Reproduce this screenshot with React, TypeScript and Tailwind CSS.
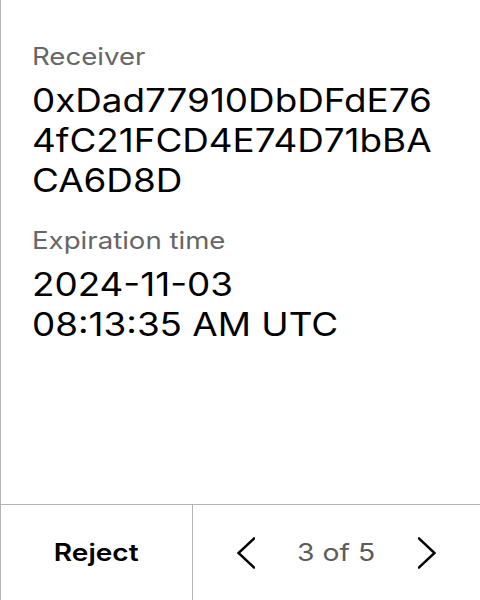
import { FC } from 'react';

// the reference type is set wide; a small horizontal stretch matches it better than tracking
const Field: FC<{ label: string; lines: string[] }> = ({ label, lines }) => (
	<div className="flex origin-left scale-x-[1.15] flex-col gap-2 self-start">
		<div className="text-[24px] leading-[32px] text-[#666666]">{label}</div>
		<div className="text-[32px] leading-[40px] text-black">
			{lines.map((line) => (
				<div key={line}>{line}</div>
			))}
		</div>
	</div>
);

const Chevron: FC<{ dir: 'left' | 'right' }> = ({ dir }) => (
	<svg width="18" height="32" viewBox="0 0 18 32" fill="none" className="shrink-0">
		<polyline
			points={dir === 'left' ? '17,1.5 1.5,16 17,30.5' : '1,1.5 16.5,16 1,30.5'}
			stroke="#000"
			strokeWidth="2.4"
			strokeLinecap="square"
			strokeLinejoin="miter"
		/>
	</svg>
);

export default function App() {
	return (
		<div
			className="flex h-[600px] w-[480px] flex-col border-l border-[#b3b3b3] bg-white"
			style={{ fontFamily: 'Inter, "Liberation Sans", sans-serif' }}>
			<div className="flex flex-1 flex-col gap-6 pl-[31px] pt-[41px]">
				<Field
					label="Receiver"
					lines={['0xDad77910DbDFdE76', '4fC21FCD4E74D71bBA', 'CA6D8D']}
				/>
				<Field label="Expiration time" lines={['2024-11-03', '08:13:35 AM UTC']} />
			</div>
			<div className="flex h-[96px] border-t border-[#b3b3b3]">
				<button
					type="button"
					className="flex w-[192px] items-center justify-center border-r border-[#b3b3b3] text-[24px] font-semibold text-black">
					<span className="scale-x-[1.17]">Reject</span>
				</button>
				<div className="flex flex-1 items-center justify-center gap-[48px]">
					<Chevron dir="left" />
					<span className="scale-x-[1.18] text-[24px] text-[#5c5c5c]">3 of 5</span>
					<Chevron dir="right" />
				</div>
			</div>
		</div>
	);
}
